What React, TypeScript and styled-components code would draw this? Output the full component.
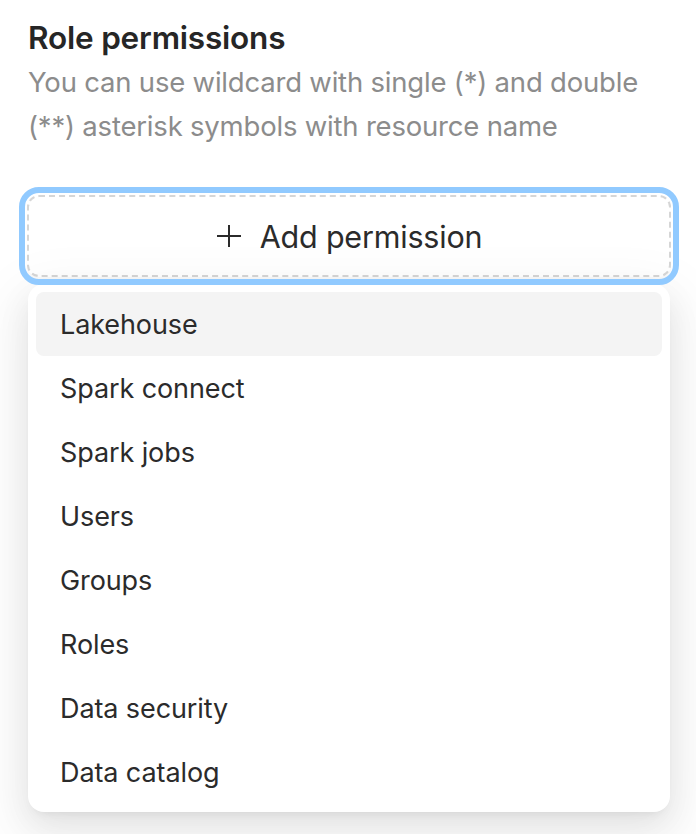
import React from "react";
import styled, { createGlobalStyle } from "styled-components";

const Global = createGlobalStyle`
  html, body { margin: 0; padding: 0; background: #ffffff; }
  body { font-family: Inter, "Liberation Sans", sans-serif; -webkit-font-smoothing: antialiased; }
`;

const Page = styled.div`
  padding: 16px 25px 0 27px;
  width: 644px;
  height: 818px;
  box-sizing: content-box;
`;

const Title = styled.h2`
  margin: 0 0 0 1px;
  font-size: 31.5px;
  line-height: 44px;
  font-weight: 600;
  color: #262626;
  letter-spacing: -0.2px;
`;

const Description = styled.p`
  margin: 0 0 0 1px;
  font-size: 27.5px;
  line-height: 44px;
  color: #8c8c8c;
  letter-spacing: -0.2px;
`;

const AddButton = styled.button`
  margin-top: 47px;
  width: 100%;
  height: 82px;
  display: flex;
  align-items: center;
  justify-content: center;
  gap: 18px;
  background: #ffffff;
  border: 2px dashed #d6d6d6;
  border-radius: 12px;
  outline: 6px solid #91caff;
  outline-offset: 2px;
  font-family: inherit;
  font-size: 30.5px;
  color: #2b2b2b;
  cursor: pointer;
  box-shadow: 0 4px 0 rgba(0, 0, 0, 0.02);
  letter-spacing: -0.2px;
`;

const Menu = styled.ul`
  list-style: none;
  margin: 7px 1px 0;
  padding: 8px;
  background: #ffffff;
  border-radius: 16px;
  box-shadow: 0 12px 32px 0 rgba(0, 0, 0, 0.08), 0 6px 12px -8px rgba(0, 0, 0, 0.12),
    0 18px 56px 16px rgba(0, 0, 0, 0.05);
`;

const Item = styled.li<{ $active?: boolean }>`
  height: 64px;
  display: flex;
  align-items: center;
  padding: 0 24px;
  border-radius: 8px;
  font-size: 27px;
  color: #2b2b2b;
  background: ${(p) => (p.$active ? "#f4f4f4" : "transparent")};
  letter-spacing: -0.1px;
`;

const items = [
  "Lakehouse",
  "Spark connect",
  "Spark jobs",
  "Users",
  "Groups",
  "Roles",
  "Data security",
  "Data catalog",
];

export default function App() {
  return (
    <>
      <Global />
      <Page>
        <Title>Role permissions</Title>
        <Description>
          You can use wildcard with single (*) and double (**) asterisk symbols with resource name
        </Description>
        <AddButton>
          <svg width="26" height="26" viewBox="0 0 26 26" fill="none" stroke="#2b2b2b" strokeWidth="2">
            <line x1="1" y1="13" x2="25" y2="13" />
            <line x1="13" y1="2" x2="13" y2="24" />
          </svg>
          <span>Add permission</span>
        </AddButton>
        <Menu>
          {items.map((it, i) => (
            <Item key={it} $active={i === 0}>
              {it}
            </Item>
          ))}
        </Menu>
      </Page>
    </>
  );
}
